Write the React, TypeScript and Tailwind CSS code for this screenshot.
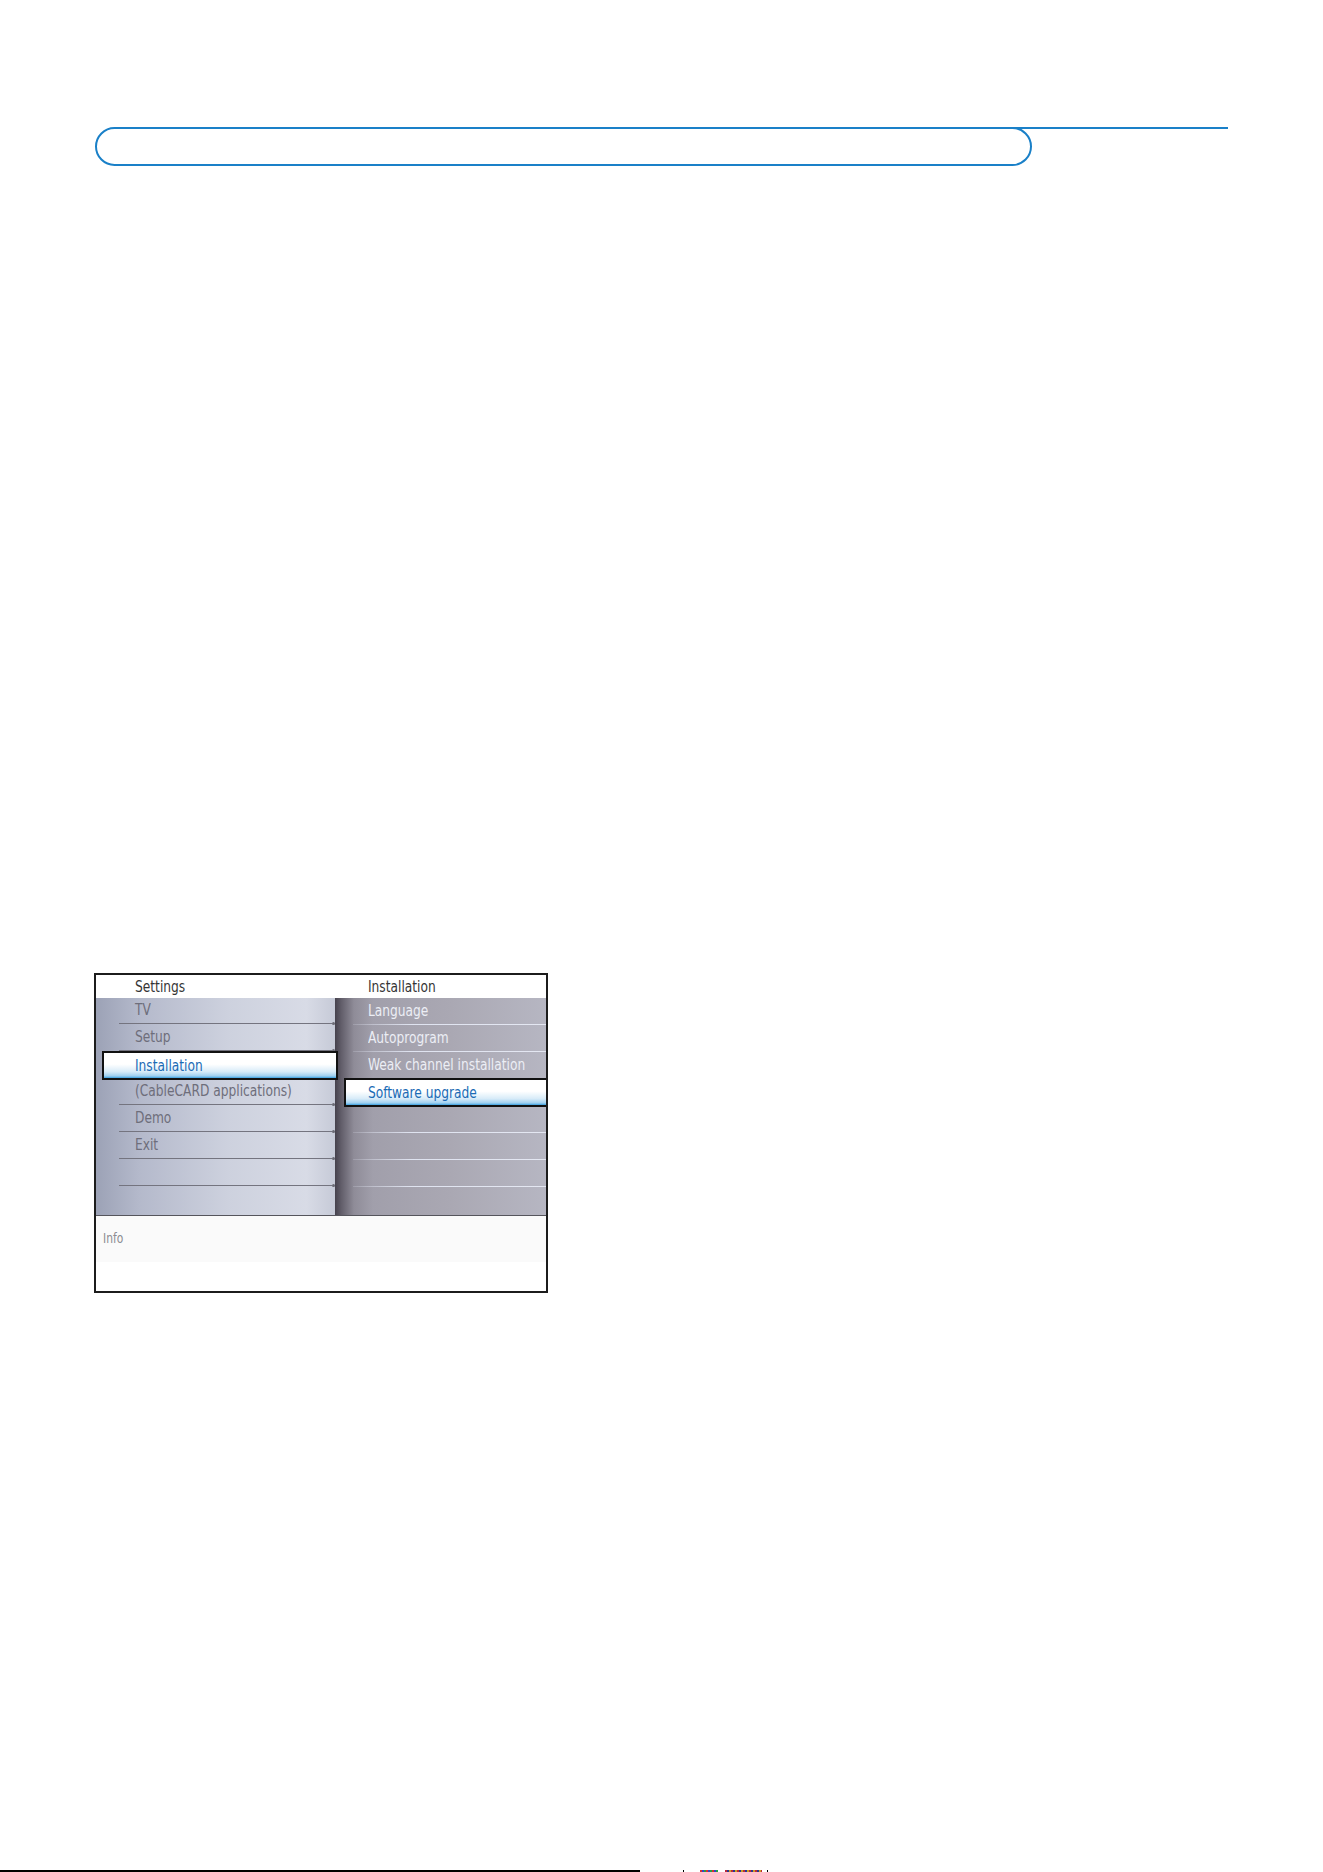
const menuFont = { fontFamily: '"Liberation Sans Narrow", "DejaVu Sans Condensed", "Liberation Sans", sans-serif' };

const leftItems = ['TV', 'Setup', 'Installation', '(CableCARD applications)', 'Demo', 'Exit', '', ''];
const rightItems = ['Language', 'Autoprogram', 'Weak channel installation', 'Software upgrade', '', '', '', ''];

// the TV font is narrower than anything installed, so squeeze the label a bit
function Label({ text }: { text: string }) {
  return <span className="inline-block origin-left scale-x-[0.85] whitespace-nowrap">{text}</span>;
}

function Highlight({ label, className }: { label: string; className: string }) {
  return (
    <div
      className={`relative z-10 shrink-0 h-[29px] border-2 border-[#111] bg-[linear-gradient(180deg,#ffffff_0%,#ffffff_45%,#d7ebf8_75%,#9fd0f0_92%,#3aa0e0_100%)] flex items-center text-[16px] text-[#1b6bb5] ${className}`}
    >
      <Label text={label} />
    </div>
  );
}

function LeftColumn() {
  return (
    <div className="w-[239px] shrink-0 flex flex-col bg-[linear-gradient(90deg,#9ca2b6_0%,#b4b9cb_18%,#cdd1de_55%,#d8dbe6_88%,#c6cad7_100%)]">
      {leftItems.map((item, i) =>
        item === 'Installation' ? (
          <div key={i} className="h-[27px] flex items-center">
            <Highlight label={item} className="ml-[6px] w-[236px] pl-[31px]" />
          </div>
        ) : (
          <div key={i} className="h-[27px] flex flex-col">
            <div className="flex-1 flex items-center pl-[39px] text-[16px] text-[#6e6e7b]">
              <Label text={item} />
            </div>
            {i < leftItems.length - 1 && (
              <div className="ml-[23px] flex items-center">
                <div className="flex-1 h-px bg-[#74747f]" />
                <div className="w-[3px] h-[3px] rounded-full bg-[#6a6a74]" />
              </div>
            )}
          </div>
        )
      )}
    </div>
  );
}

function RightColumn() {
  return (
    <div className="flex-1 min-w-0 overflow-hidden flex flex-col bg-[linear-gradient(90deg,#45414c_0%,#625e6a_3%,#8f8c98_9%,#a19fab_18%,#aaa8b3_55%,#b6b6c2_100%)]">
      {rightItems.map((item, i) =>
        item === 'Software upgrade' ? (
          <div key={i} className="h-[27px] flex items-center">
            <Highlight label={item} className="ml-[9px] w-[204px] pl-[22px] border-r-0" />
          </div>
        ) : (
          <div key={i} className="h-[27px] flex flex-col">
            <div className="flex-1 flex items-center pl-[33px] text-[16px] text-[#eceef5] overflow-hidden">
              <Label text={item} />
            </div>
            {i < rightItems.length - 1 && (
              <div className="ml-[18px] h-px bg-[linear-gradient(90deg,rgba(220,224,238,0.2)_0%,#dfe3f0_30%,#e4e7f2_100%)]" />
            )}
          </div>
        )
      )}
    </div>
  );
}

function SettingsMenu() {
  return (
    <div className="ml-[94px] w-[454px] h-[320px] border-2 border-[#1c1c1c] bg-white flex flex-col overflow-hidden" style={menuFont}>
      <div className="h-[23px] flex items-center text-[16px] text-[#353535]">
        <div className="w-[239px] pl-[39px]">
          <Label text="Settings" />
        </div>
        <div className="pl-[33px]">
          <Label text="Installation" />
        </div>
      </div>
      <div className="h-[217px] flex">
        <LeftColumn />
        <RightColumn />
      </div>
      <div className="flex-1 border-t border-[#55555c] flex flex-col">
        <div className="h-[46px] bg-[#fafafa] pl-[7px] pt-[15px] text-[14px] text-[#8c8c92] leading-none">
          <Label text="Info" />
        </div>
      </div>
    </div>
  );
}

function CropMarks() {
  return (
    <div className="h-[2px] flex items-end">
      <div className="w-[640px] h-[2px] bg-black" />
      <div className="ml-[43px] w-px h-[2px] bg-black" />
      <div className="ml-[16px] w-[18px] h-[2px] bg-[repeating-linear-gradient(90deg,#d83030_0_2px,#3048c8_2px_4px,#28a040_4px_6px)]" />
      <div className="ml-[7px] w-[37px] h-[2px] bg-[repeating-linear-gradient(90deg,#c02838_0_2px,#283890_2px_4px,#c8a020_4px_6px)]" />
      <div className="ml-[5px] w-px h-[2px] bg-black" />
    </div>
  );
}

export default function App() {
  return (
    <div className="w-[1323px] h-[1872px] bg-white flex flex-col">
      <div className="mt-[127px] ml-[95px] w-[1133px] flex items-start">
        <div className="w-[937px] h-[39px] rounded-full border-2 border-[#1a80c8] bg-white" />
        <div className="flex-1 -ml-[20px] h-[2px] bg-[#1a80c8]" />
      </div>
      <div className="mt-[807px]">
        <SettingsMenu />
      </div>
      <div className="flex-1" />
      <CropMarks />
    </div>
  );
}
